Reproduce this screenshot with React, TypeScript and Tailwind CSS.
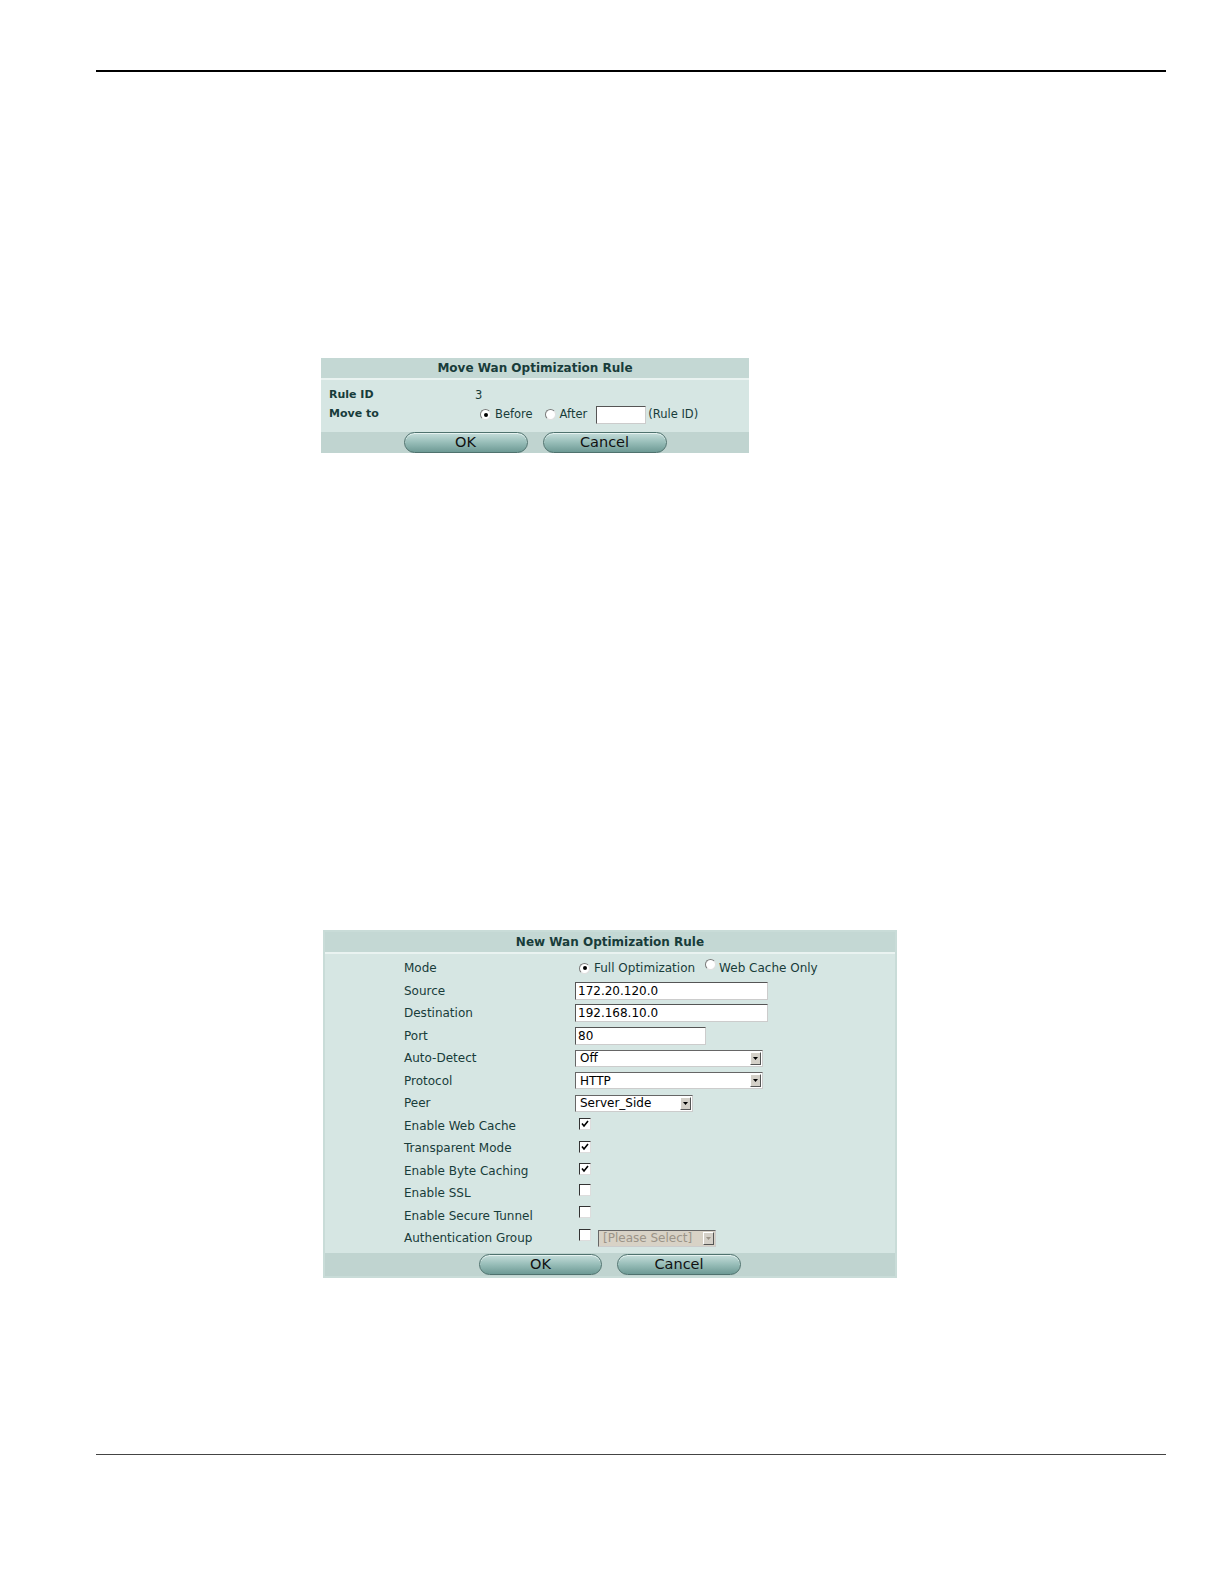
import React from "react";

const font = { fontFamily: '"DejaVu Sans", Verdana, sans-serif' };

function PillButton({ label, className = "" }: { label: string; className?: string }) {
  return (
    <button
      className={`h-[21px] rounded-full border border-[#4f726e] bg-gradient-to-b from-[#c6dedb] via-[#97bdb8] to-[#6e9a95] text-[14.5px] leading-none text-[#111] shadow-[inset_0_1px_0_#e6f2f0] ${className}`}
    >
      {label}
    </button>
  );
}

function Radio({ checked }: { checked?: boolean }) {
  return (
    <span className="inline-flex h-[11px] w-[11px] items-center justify-center rounded-full border border-[#7a7a7a] border-r-[#e0e0e0] border-b-[#e0e0e0] bg-white">
      {checked && <span className="h-[4px] w-[4px] rounded-full bg-black" />}
    </span>
  );
}

function Checkbox({ checked }: { checked?: boolean }) {
  return (
    <span className="inline-flex h-[12px] w-[12px] items-center justify-center border border-[#333] border-r-[#ddd] border-b-[#ddd] bg-white">
      {checked && (
        <svg width="8" height="8" viewBox="0 0 8 8">
          <path d="M1 3.5 L3 6 L7 1" fill="none" stroke="#000" strokeWidth="1.6" />
        </svg>
      )}
    </span>
  );
}

function TextBox({ value, width }: { value: string; width: string }) {
  return (
    <div
      className={`flex h-[18px] items-center border border-[#555] border-r-[#ccc] border-b-[#ccc] bg-white pl-[2px] text-[12px] text-black ${width}`}
    >
      {value}
    </div>
  );
}

function Select({ value, width, disabled }: { value: string; width: string; disabled?: boolean }) {
  return (
    <div
      className={`flex h-[17px] items-center justify-between border border-[#666] border-r-[#ccc] border-b-[#ccc] ${
        disabled ? "bg-[#d8d2c6] text-[#9b9488]" : "bg-white text-black"
      } ${width}`}
    >
      <span className="pl-[4px] text-[12px]">{value}</span>
      <span className="mr-[1px] flex h-[13px] w-[11px] items-center justify-center border border-[#fff] border-r-[#555] border-b-[#555] bg-[#d4d0c8]">
        <svg width="5" height="3" viewBox="0 0 5 3">
          <path d="M0 0 H5 L2.5 3 Z" fill={disabled ? "#9b9488" : "#000"} />
        </svg>
      </span>
    </div>
  );
}

function MoveDialog() {
  return (
    <div className="ml-[321px] w-[428px] bg-[#d6e6e3] text-[#183c3a]" style={font}>
      <div className="flex h-[22px] items-center justify-center border-b-2 border-[#eaf3f1] bg-[#c4d8d4] text-[12px] font-bold">
        Move Wan Optimization Rule
      </div>
      <div className="px-[8px] pt-[6px] pb-[8px] text-[11px]">
        <div className="flex h-[19px] items-center">
          <span className="w-[146px] font-bold">Rule ID</span>
          <span className="text-[11.5px]">3</span>
        </div>
        <div className="flex h-[19px] items-center text-[11.5px]">
          <span className="w-[151px] text-[11px] font-bold">Move to</span>
          <span className="flex items-center gap-[4px]">
            <Radio checked />
            <span>Before</span>
          </span>
          <span className="ml-[12px] flex items-center gap-[4px]">
            <Radio />
            <span>After</span>
          </span>
          <span className="ml-[9px] h-[18px] w-[50px] border border-[#555] border-r-[#ccc] border-b-[#ccc] bg-white" />
          <span className="ml-[2px]">(Rule ID)</span>
        </div>
      </div>
      <div className="flex h-[21px] items-center justify-center gap-[15px] bg-[#c0d4d0]">
        <PillButton label="OK" className="w-[124px]" />
        <PillButton label="Cancel" className="w-[124px]" />
      </div>
    </div>
  );
}

const rows: { label: string; control: React.ReactNode }[] = [
  {
    label: "Mode",
    control: (
      <div className="flex items-center pl-[4px]">
        <span className="-mt-[4px]">
          <Radio checked />
        </span>
        <span className="ml-[4px]">Full Optimization</span>
        <span className="-mt-[4px] ml-[10px]">
          <Radio />
        </span>
        <span className="ml-[3px]">Web Cache Only</span>
      </div>
    ),
  },
  { label: "Source", control: <TextBox value="172.20.120.0" width="w-[193px]" /> },
  { label: "Destination", control: <TextBox value="192.168.10.0" width="w-[193px]" /> },
  { label: "Port", control: <TextBox value="80" width="w-[131px]" /> },
  { label: "Auto-Detect", control: <Select value="Off" width="w-[188px]" /> },
  { label: "Protocol", control: <Select value="HTTP" width="w-[188px]" /> },
  { label: "Peer", control: <Select value="Server_Side" width="w-[118px]" /> },
  { label: "Enable Web Cache", control: <span className="-mt-[3px] pl-[4px]"><Checkbox checked /></span> },
  { label: "Transparent Mode", control: <span className="-mt-[3px] pl-[4px]"><Checkbox checked /></span> },
  { label: "Enable Byte Caching", control: <span className="-mt-[3px] pl-[4px]"><Checkbox checked /></span> },
  { label: "Enable SSL", control: <span className="-mt-[3px] pl-[4px]"><Checkbox /></span> },
  { label: "Enable Secure Tunnel", control: <span className="-mt-[3px] pl-[4px]"><Checkbox /></span> },
  {
    label: "Authentication Group",
    control: (
      <div className="flex items-center pl-[4px]">
        <span className="-mt-[3px]">
          <Checkbox />
        </span>
        <span className="ml-[7px]">
          <Select value="[Please Select]" width="w-[118px]" disabled />
        </span>
      </div>
    ),
  },
];

function NewRuleDialog() {
  return (
    <div
      className="ml-[323px] w-[574px] border-2 border-[#c9dcd8] bg-[#d6e6e3] text-[#183c3a]"
      style={font}
    >
      <div className="flex h-[22px] items-center justify-center border-b-2 border-[#eaf3f1] bg-[#c4d8d4] text-[12px] font-bold">
        New Wan Optimization Rule
      </div>
      <div className="pt-[3px] pb-[3px] text-[12px]">
        {rows.map((r) => (
          <div key={r.label} className="flex h-[22.5px] items-center">
            <span className="w-[250px] pl-[79px]">{r.label}</span>
            {r.control}
          </div>
        ))}
      </div>
      <div className="flex h-[23px] items-center justify-center gap-[15px] bg-[#c0d4d0]">
        <PillButton label="OK" className="w-[123px]" />
        <PillButton label="Cancel" className="w-[124px]" />
      </div>
    </div>
  );
}

export default function App() {
  return (
    <div className="bg-white pb-[20px]">
      <div className="h-[70px]" />
      <div className="ml-[96px] mr-[58px] border-t-2 border-black" />
      <div className="h-[286px]" />
      <MoveDialog />
      <div className="h-[477px]" />
      <NewRuleDialog />
      <div className="h-[176px]" />
      <div className="ml-[96px] mr-[58px] border-t border-[#444]" />
    </div>
  );
}
